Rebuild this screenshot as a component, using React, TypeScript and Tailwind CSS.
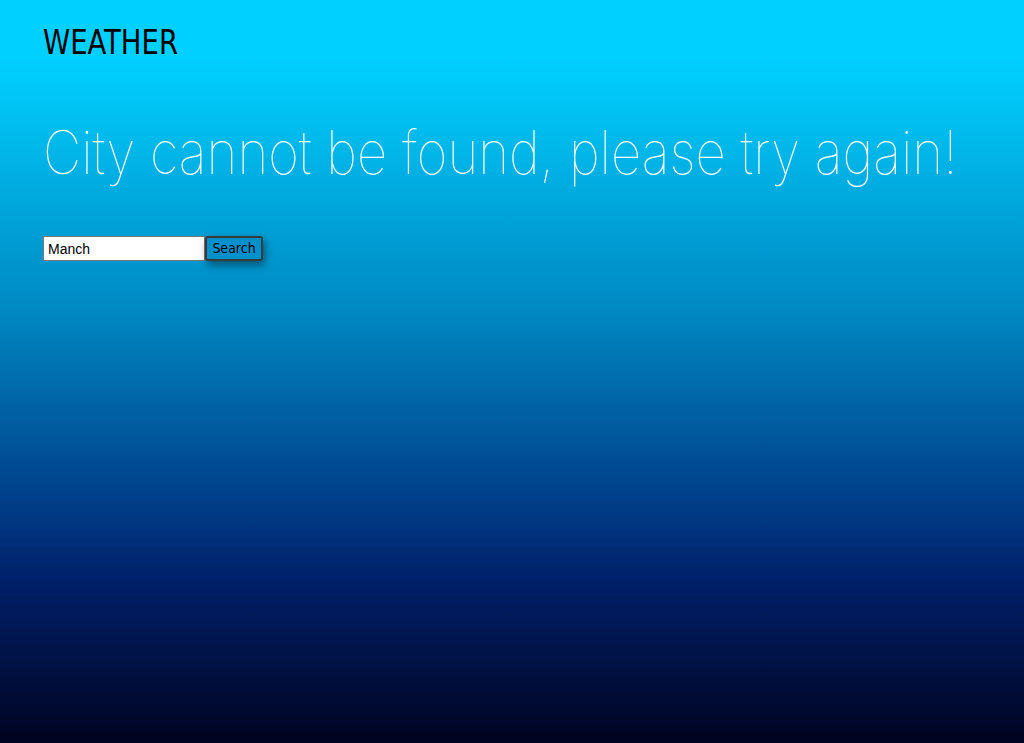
import React from "react";

export default function App() {
  return (
    <div className="min-h-[743px] w-full bg-[linear-gradient(to_bottom,#00d0ff_0%,#00d0ff_8%,#0088c2_42%,#00428c_66%,#00206a_78%,#000320_100%)] px-[43px] pt-[22px]">
      <h1 className="text-[34px] leading-[40px] text-black [font-family:'DejaVu_Sans_Condensed','Liberation_Sans_Narrow',sans-serif] [font-stretch:condensed] scale-x-[0.9] origin-left">
        WEATHER
      </h1>
      <h2 className="mt-[58px] whitespace-nowrap text-[60px] leading-[64px] text-white font-thin tracking-[0px] [font-family:Inter,sans-serif] scale-x-[0.88] origin-left">
        City cannot be found, please try again!
      </h2>
      <form className="mt-[52px] flex items-center" onSubmit={(e) => e.preventDefault()}>
        <input
          defaultValue="Manch"
          className="h-[25px] w-[162px] border border-[#767676] bg-white px-[4px] text-[14px] text-black [font-family:'Liberation_Sans',Arial,sans-serif] outline-none"
        />
        <button
          type="submit"
          className="h-[25px] w-[58px] rounded-[3px] border-2 border-[#3a3a3a] bg-[#0090cc] text-[14px] text-black shadow-[2px_4px_8px_rgba(0,0,0,0.45)] [font-family:'DejaVu_Sans_Condensed',sans-serif]"
        >
          Search
        </button>
      </form>
    </div>
  );
}
